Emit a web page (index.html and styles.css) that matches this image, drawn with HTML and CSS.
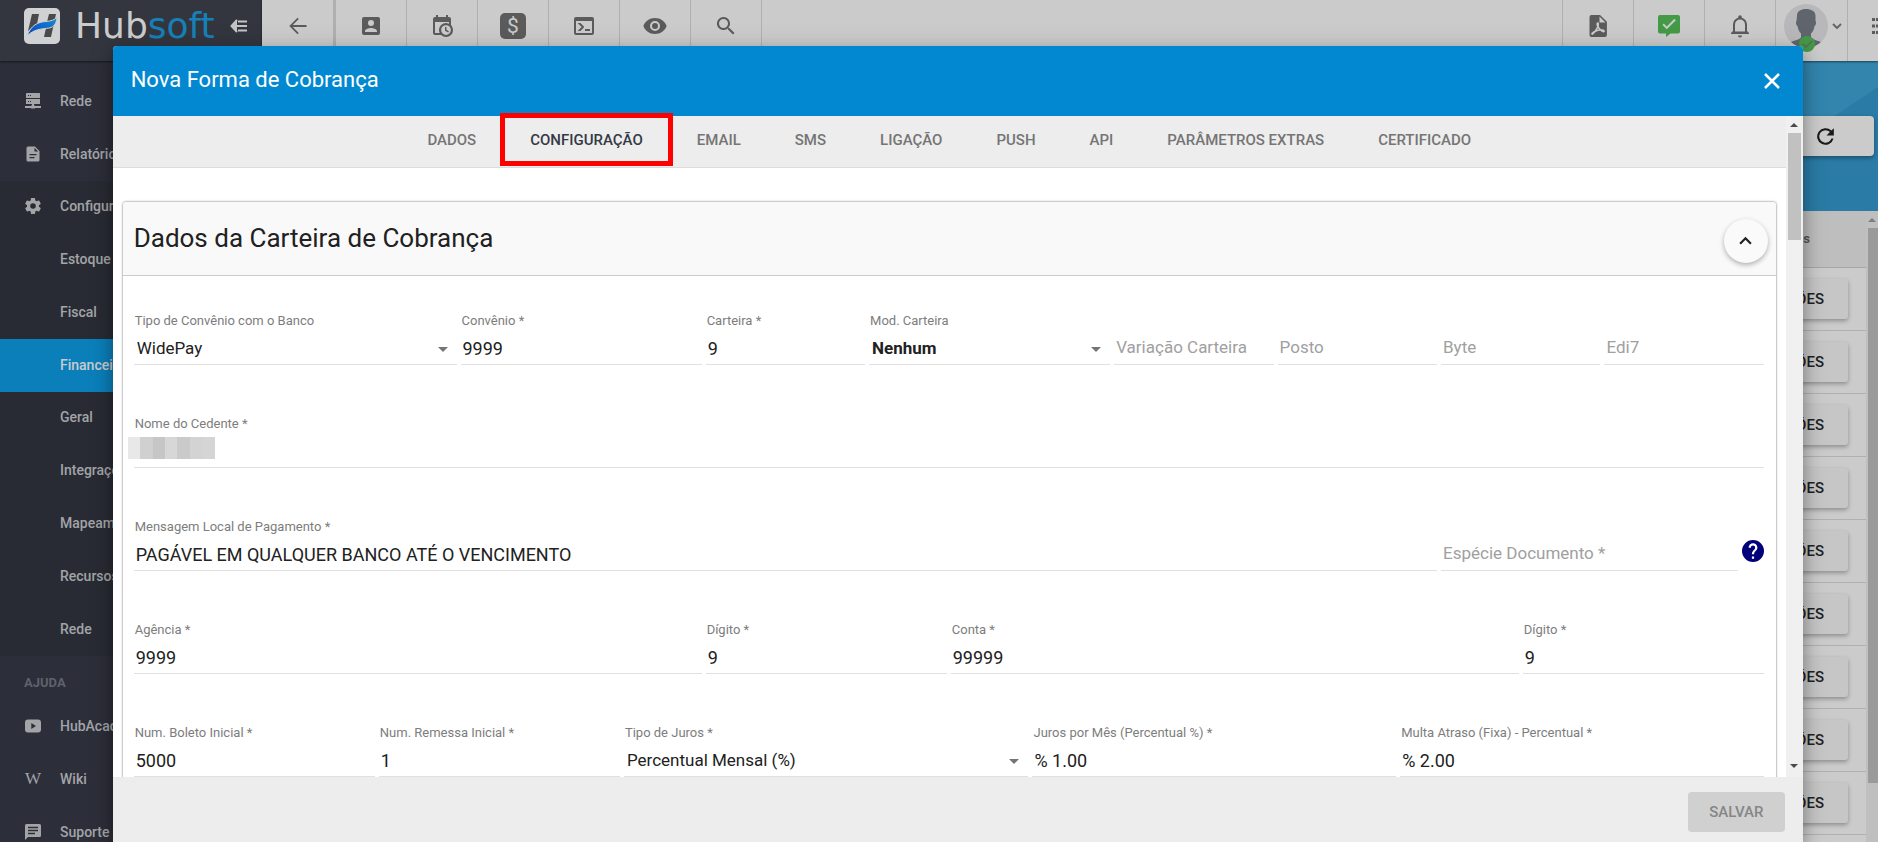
FILE: index.html
```html
<!DOCTYPE html>
<html lang="pt-BR">
<head>
<meta charset="utf-8">
<title>Hubsoft - Nova Forma de Cobrança</title>
<link rel="stylesheet" href="styles.css">
</head>
<body>
<div class="app">
  <aside class="sidebar">
    <div class="brand">
      <svg class="brand-mark" viewBox="0 0 36 36" aria-hidden="true">
        <defs><linearGradient id="swoosh" x1="0" y1="1" x2="1" y2="0"><stop offset="0" stop-color="#0a3fc0"/><stop offset="1" stop-color="#1490d4"/></linearGradient></defs>
        <rect width="36" height="36" rx="5" fill="#d0d1d2"/>
        <path d="M8 6h7l-2 10-9 7z" fill="#4a4a4a"/>
        <path d="M25 6h7l-5 23h-7l2-9-7 0 3-4 5-2z" fill="#4a4a4a"/>
        <path d="M3 28C7 17 14 14 22 13.500 27 13 31 12 33 9c-.500 6-2.500 9-6 10.500C22 21.500 12 19 3 28z" fill="url(#swoosh)" stroke="#d0d1d2" stroke-width="1"/>
      </svg>
      <span class="brand-name">Hub<span class="brand-accent">soft</span></span>
      <button class="collapse" aria-label="Recolher menu">
        <svg width="18" height="14" viewBox="0 0 18 14" fill="none" stroke="currentColor" stroke-width="2"><path d="M7 1 1.500 7 7 13M2 7h15M8 2.500h9M8 11.500h9"/></svg>
      </button>
    </div>
    <nav class="menu">
      <a class="item" href="#"><svg class="mi" viewBox="0 0 16 16"><path d="M1.500 0h13l.500.500V5H1V.500zM1 6h14v5H1zM7 11h2v1.500h1V13h6v2h-6v.500H6V15H0v-2h6v-.500h1z"/><path d="M3 2.500h1M5 2.500h1M3 8.500h1M5 8.500h1" stroke="#2c2e39"/></svg>Rede</a>
      <a class="item" href="#"><svg class="mi" viewBox="0 0 16 16"><path fill-rule="evenodd" d="M3 .500h7L14.500 5v9a1.500 1.500 0 0 1-1.500 1.500H3A1.500 1.500 0 0 1 1.500 14V2A1.500 1.500 0 0 1 3 .500zM9.500 1.800V5.500h3.700zM4.500 8v1.300h7V8zM4.500 11v1.300h5V11z"/></svg>Relatórios</a>
      <div class="section">
        <a class="item" href="#"><svg class="mi" viewBox="2 2 20 20"><path d="M12 15.500A3.500 3.500 0 0 1 8.500 12 3.500 3.500 0 0 1 12 8.500a3.500 3.500 0 0 1 3.500 3.500 3.500 3.500 0 0 1-3.500 3.500m7.430-2.530c.040-.320.070-.640.070-.970s-.030-.660-.070-1l2.110-1.630c.190-.150.240-.420.120-.640l-2-3.460c-.120-.220-.390-.310-.610-.220l-2.490 1c-.520-.390-1.060-.730-1.690-.980l-.370-2.650A.506.506 0 0 0 14 2h-4c-.250 0-.460.180-.500.420l-.370 2.650c-.630.250-1.170.590-1.690.980l-2.490-1c-.220-.090-.490 0-.610.220l-2 3.460c-.130.220-.070.490.120.640L4.570 11c-.040.340-.070.670-.070 1s.030.650.070.970l-2.110 1.660c-.190.150-.250.420-.120.640l2 3.460c.120.220.390.300.610.220l2.490-1.010c.520.400 1.060.740 1.690.990l.370 2.650c.040.240.250.420.500.420h4c.250 0 .460-.180.500-.420l.370-2.650c.630-.260 1.170-.590 1.690-.990l2.490 1.010c.220.080.490 0 .610-.220l2-3.460c.120-.220.070-.490-.120-.640z"/></svg>Configurações</a>
        <a class="item sub" href="#">Estoque</a>
        <a class="item sub" href="#">Fiscal</a>
        <a class="item sub active" href="#">Financeiro</a>
        <a class="item sub" href="#">Geral</a>
        <a class="item sub" href="#">Integrações</a>
        <a class="item sub" href="#">Mapeamento</a>
        <a class="item sub" href="#">Recursos</a>
        <a class="item sub" href="#">Rede</a>
      </div>
      <h2 class="heading">AJUDA</h2>
      <a class="item" href="#"><svg class="mi" viewBox="0 0 16 16"><path fill-rule="evenodd" d="M3 1.500h10a3 3 0 0 1 3 3v7a3 3 0 0 1-3 3H3a3 3 0 0 1-3-3v-7a3 3 0 0 1 3-3zM6.300 5v6l4.700-3z"/></svg>HubAcademy</a>
      <a class="item" href="#"><span class="mi wiki" aria-hidden="true">W</span>Wiki</a>
      <a class="item" href="#"><svg class="mi" viewBox="0 0 16 16"><path fill-rule="evenodd" d="M1.500 0h13A1.500 1.500 0 0 1 16 1.500v10a1.500 1.500 0 0 1-1.500 1.500H3l-3 3V1.500A1.500 1.500 0 0 1 1.500 0zM3 2.800v1.400h10V2.800zM3 5.800v1.400h10V5.800zM3 8.800v1.400h7V8.800z"/></svg>Suporte</a>
    </nav>
  </aside>
  <div class="main">
    <header class="toolbar">
      <button class="tool" aria-label="Voltar"><svg viewBox="0 0 24 24"><path d="M20.500 11.100v1.800H6.800l6 6-1.300 1.300L3.300 12l8.200-8.200 1.300 1.300-6 6z"/></svg></button>
      <button class="tool" aria-label="Clientes"><svg viewBox="0 0 24 24"><path d="M6 17c0-2 4-3.100 6-3.100s6 1.100 6 3.100v1H6m9-9a3 3 0 0 1-6 0 3 3 0 0 1 6 0M3 5v14a2 2 0 0 0 2 2h14a2 2 0 0 0 2-2V5a2 2 0 0 0-2-2H5a2 2 0 0 0-2 2z" fill-rule="evenodd"/></svg></button>
      <button class="tool" aria-label="Agenda"><svg viewBox="0 0 24 24"><path d="M15 13h1.500v2.800l2.400 1.400-.700 1.300L15 16.700zM19 8H5v11h4.700A7 7 0 0 1 19 9.700zM5 21a2 2 0 0 1-2-2V5a2 2 0 0 1 2-2h1V1h2v2h8V1h2v2h1a2 2 0 0 1 2 2v6.100A7 7 0 0 1 11.100 21zM16 11.200a4.800 4.800 0 1 0 0 9.700 4.800 4.800 0 0 0 0-9.700z"/></svg></button>
      <button class="tool" aria-label="Financeiro"><span class="money">$</span></button>
      <button class="tool" aria-label="Terminal"><svg viewBox="0 0 24 24"><path d="M20 19V7H4v12zM20 3a2 2 0 0 1 2 2v14a2 2 0 0 1-2 2H4a2 2 0 0 1-2-2V5a2 2 0 0 1 2-2zM13 17v-2h5v2zM9.600 13 5.600 9h2.800l3.300 3.300c.400.400.400 1 0 1.400L8.400 17H5.600z"/></svg></button>
      <button class="tool" aria-label="Visualizar"><svg viewBox="0 0 24 24"><path d="M12 9a3 3 0 1 0 0 6 3 3 0 0 0 0-6m0 8a5 5 0 1 1 0-10 5 5 0 0 1 0 10m0-13C6.500 4 2 7.300 .400 12c1.600 4.700 6.100 8 11.600 8s10-3.300 11.600-8C22 7.300 17.500 4 12 4z"/></svg></button>
      <button class="tool" aria-label="Buscar"><svg viewBox="0 0 24 24"><path d="M9.500 3a6.500 6.500 0 0 1 5 10.600l.300.300h.700l5 5-1.500 1.500-5-5v-.700l-.300-.300A6.500 6.500 0 1 1 9.500 3m0 2a4.500 4.500 0 1 0 0 9 4.500 4.500 0 0 0 0-9z"/></svg></button>
      <span class="spacer"></span>
      <button class="tool right" aria-label="PDF"><svg viewBox="0 0 24 24"><path fill-rule="evenodd" d="M14 1H5.500A2 2 0 0 0 3.500 3v18a2 2 0 0 0 2 2h13.400a2 2 0 0 0 2-2V7.800zM13.500 2.500v6h6z"/><path d="M12 9c-2 0-.500 5 4 8.200 2 1 3 0 1.500-.900-2.500-1-7 0-10.500 2.200-2 1.500-1 2.500.500.800C10 16.500 13.500 11 12 9z" fill="none" stroke="#cbcbcb" stroke-width="1.500"/></svg></button>
      <button class="tool right ok" aria-label="Mensagens"><svg viewBox="0 0 24 24"><path fill-rule="evenodd" d="M3 1h18a2 2 0 0 1 2 2v14.500a2 2 0 0 1-2 2h-7.500L9 23v-3.500H3a2 2 0 0 1-2-2V3a2 2 0 0 1 2-2zM6.800 9.500 5.500 10.900l4.300 4.300 9-9-1.400-1.400-7.600 7.600z"/></svg></button>
      <button class="tool right" aria-label="Notificações"><svg viewBox="0 0 24 24"><path d="M10 21.500h4a2 2 0 0 1-4 0M3 20v-1l2-2v-6.500c0-3.300 2-6 5.200-6.800V3a1.800 1.800 0 0 1 3.600 0v.700c3.200.800 5.200 3.500 5.200 6.800V17l2 2v1zM17 17.500v-7a5 5 0 0 0-10 0v7z"/></svg></button>
      <button class="tool right user" aria-label="Usuário">
        <span class="avatar">
          <svg class="face" viewBox="0 0 44 44"><defs><clipPath id="round"><circle cx="22" cy="22" r="22"/></clipPath></defs><g clip-path="url(#round)"><rect width="44" height="44" fill="#b8b8bb"/><path d="M13 12c0-5 4-7 9-7s9.500 2 9.500 7v5c1 1 .500 4-1 5-.500 4-2 6-3.500 7.500v4c2 3 10 3 13 7V46H4v-6c3-3.500 11-3.500 13-6.500v-4c-2-2-3-4-3.500-7.500-1.500-1-2-4-1-5z" fill="#60656d"/></g></svg>
          <svg class="status" viewBox="0 0 16 16"><circle cx="8" cy="8" r="8" fill="#449a46"/><path d="m4 8 3 3 6-6" fill="none" stroke="#5b6a62" stroke-width="1.500"/></svg>
        </span>
        <svg class="caret" viewBox="0 0 10 6"><path d="m1 1 4 4 4-4" fill="none" stroke="#666" stroke-width="2"/></svg>
      </button>
      <button class="tool right last" aria-label="Mais opções"><svg viewBox="0 0 24 24"><path d="M4 4h3v3H4zM4 10.500h3v3H4zM4 17h3v3H4zM8 4h12v3H8zM8 10.500h12v3H8zM8 17h12v3H8z"/></svg></button>
    </header>
    <section class="banner">
      <svg class="banner-art" viewBox="0 0 75 150" preserveAspectRatio="none" aria-hidden="true"><path d="M75 26 0 76V150h75z" fill="#2a7ba5"/></svg>
      <button class="refresh" aria-label="Atualizar"><svg viewBox="0 0 24 24"><path d="M17.650 6.350A8 8 0 1 0 19.730 14h-2.080A6 6 0 1 1 12 6c1.660 0 3.140.690 4.220 1.780L13 11h7V4z"/></svg></button>
    </section>
    <div class="listing">
      <table class="grid">
        <thead><tr><th>Ações</th></tr></thead>
        <tbody>
          <tr><td><button class="action">AÇÕES</button></td></tr>
          <tr><td><button class="action">AÇÕES</button></td></tr>
          <tr><td><button class="action">AÇÕES</button></td></tr>
          <tr><td><button class="action">AÇÕES</button></td></tr>
          <tr><td><button class="action">AÇÕES</button></td></tr>
          <tr><td><button class="action">AÇÕES</button></td></tr>
          <tr><td><button class="action">AÇÕES</button></td></tr>
          <tr><td><button class="action">AÇÕES</button></td></tr>
          <tr><td><button class="action">AÇÕES</button></td></tr>
        </tbody>
      </table>
      <div class="scrollbar page-bar" aria-hidden="true"><i class="up"></i><i class="thumb"></i></div>
    </div>
  </div>
</div>

<div class="dialog" role="dialog" aria-labelledby="dialog-title">
  <header class="dialog-head">
    <h1 id="dialog-title" class="dialog-title">Nova Forma de Cobrança</h1>
    <button class="close" aria-label="Fechar"><svg viewBox="0 0 16 16"><path d="m1 1 14 14M15 1 1 15" stroke="#fff" stroke-width="2.500"/></svg></button>
  </header>
  <div class="dialog-body">
    <div class="scroll">
      <div class="tabs" role="tablist">
        <button class="tab" role="tab">DADOS</button>
        <button class="tab selected" role="tab" aria-selected="true">CONFIGURAÇÃO</button>
        <button class="tab" role="tab">EMAIL</button>
        <button class="tab" role="tab">SMS</button>
        <button class="tab" role="tab">LIGAÇÃO</button>
        <button class="tab" role="tab">PUSH</button>
        <button class="tab" role="tab">API</button>
        <button class="tab" role="tab">PARÂMETROS EXTRAS</button>
        <button class="tab" role="tab">CERTIFICADO</button>
      </div>
      <section class="panel">
        <header class="panel-head">
          <h2 class="panel-title">Dados da Carteira de Cobrança</h2>
          <button class="fab" aria-label="Recolher"><svg viewBox="0 0 12 8"><path d="m1 7 5-5 5 5" fill="none" stroke="#212121" stroke-width="2"/></svg></button>
        </header>
        <form class="fields">
          <label class="field s8"><span class="label">Tipo de Convênio com o Banco</span><span class="pick"><select class="value"><option>WidePay</option></select></span></label>
          <label class="field s6"><span class="label">Convênio *</span><input class="value" value="9999"></label>
          <label class="field s4"><span class="label">Carteira *</span><input class="value" value="9"></label>
          <label class="field s6"><span class="label">Mod. Carteira</span><span class="pick"><select class="value strong"><option>Nenhum</option></select></span></label>
          <div class="field s4"><input class="value" placeholder="Variação Carteira" aria-label="Variação Carteira"></div>
          <div class="field s4"><input class="value" placeholder="Posto" aria-label="Posto"></div>
          <div class="field s4"><input class="value" placeholder="Byte" aria-label="Byte"></div>
          <div class="field s4"><input class="value" placeholder="Edi7" aria-label="Edi7"></div>

          <label class="field s40"><span class="label">Nome do Cedente *</span><input class="value"><span class="redacted"><i></i><i></i><i></i><i></i><i></i><i></i><i></i></span></label>

          <label class="field s32"><span class="label">Mensagem Local de Pagamento *</span><input class="value" value="PAGÁVEL EM QUALQUER BANCO ATÉ O VENCIMENTO"></label>
          <div class="with-help s8">
            <div class="field"><input class="value" placeholder="Espécie Documento *" aria-label="Espécie Documento"></div>
            <button type="button" class="help" aria-label="Ajuda"><svg viewBox="2 2 20 20"><path fill="#00007b" d="M15.070 11.250l-.900.920C13.450 12.890 13 13.500 13 15h-2v-.500c0-1.110.450-2.110 1.170-2.830l1.240-1.260c.370-.360.590-.860.590-1.410a2 2 0 0 0-4 0H8a4 4 0 0 1 8 0c0 .880-.360 1.670-.930 2.250M13 19h-2v-2h2M12 2a10 10 0 1 0 0 20 10 10 0 0 0 0-20z"/></svg></button>
          </div>

          <label class="field s14"><span class="label">Agência *</span><input class="value" value="9999"></label>
          <label class="field s6"><span class="label">Dígito *</span><input class="value" value="9"></label>
          <label class="field s14"><span class="label">Conta *</span><input class="value" value="99999"></label>
          <label class="field s6"><span class="label">Dígito *</span><input class="value" value="9"></label>

          <label class="field s6"><span class="label">Num. Boleto Inicial *</span><input class="value" value="5000"></label>
          <label class="field s6"><span class="label">Num. Remessa Inicial *</span><input class="value" value="1"></label>
          <label class="field s10"><span class="label">Tipo de Juros *</span><span class="pick"><select class="value"><option>Percentual Mensal (%)</option></select></span></label>
          <label class="field s9"><span class="label">Juros por Mês (Percentual %) *</span><input class="value" value="% 1.00"></label>
          <label class="field s9"><span class="label">Multa Atraso (Fixa) - Percentual *</span><input class="value" value="% 2.00"></label>
        </form>
      </section>
    </div>
    <div class="scrollbar dialog-bar" aria-hidden="true"><i class="up"></i><i class="thumb"></i><i class="down"></i></div>
  </div>
  <footer class="dialog-foot"><button class="save" disabled>SALVAR</button></footer>
</div>
</body>
</html>
```
FILE: styles.css
```css
* { box-sizing: border-box; }
body { margin: 0; height: 100vh; overflow: hidden; font-family: Roboto, "Liberation Sans", sans-serif; color: #212121; }
button, input, select { font: inherit; color: inherit; margin: 0; padding: 0; border: 0; background: none; }
h1, h2 { margin: 0; font-weight: 400; }
a { color: inherit; text-decoration: none; }
svg { display: block; fill: currentColor; }

.app { display: flex; height: 100vh; overflow: hidden; }

/* Sidebar */
.sidebar { width: 262px; flex: none; background: #2c2e39; color: #a3a4a8; box-shadow: 0 0 8px rgba(0,0,0,.4); z-index: 1; }
.brand { display: flex; align-items: center; height: 61px; padding: 0 14px 9px 24px; background: #33363f; box-shadow: 0 1px 2px rgba(0,0,0,.5); }
.brand-mark { width: 36px; height: 36px; }
.brand-name { flex: 1; margin-left: 15px; font-family: "DejaVu Sans", sans-serif; font-size: 36px; line-height: 36px; color: #cccccd; }
.brand-accent { color: #1681b8; }
.collapse { color: #c4c4c6; }
.menu { padding-top: 14px; font-size: 14px; font-weight: 500; }
.item { display: flex; align-items: center; gap: 19px; height: 53px; padding: 0 0 2px 25px; white-space: nowrap; }
.mi { width: 16px; height: 16px; flex: none; }
.wiki { font: 400 17px/16px "Liberation Serif", serif; }
.section { display: grid; grid-auto-rows: 1fr; height: 475px; background: #282b33; }
.section .item { height: auto; }
.section .sub { padding-left: 60px; }
.active { background: #0b7fba; color: #cbcbcb; }
.heading { height: 44px; padding: 19px 24px 0; font-size: 13px; line-height: 16px; font-weight: 700; color: #5f626a; }

/* Toolbar */
.main { flex: 1; min-width: 0; display: flex; flex-direction: column; background: #cbcbcb; }
.toolbar { display: flex; height: 61px; flex: none; background: #cbcbcb; color: #5b5b5b; box-shadow: 0 1px 2px rgba(0,0,0,.5); z-index: 1; }
.tool { display: flex; align-items: center; justify-content: center; width: 71px; padding-bottom: 9px; border-right: 1px solid #b0b0b0; flex: none; }
.tool svg { width: 24px; height: 24px; }
.tool:first-child { border-right: 3px solid #b0b0b0; width: 74px; }
.right { border-right: 0; border-left: 1px solid #b0b0b0; }
.ok { color: #449a46; }
.spacer { flex: 1; }
.money { width: 26px; height: 26px; border-radius: 5px; background: #5b5b5b; color: #cbcbcb; font-size: 21px; line-height: 26px; }
.user { width: 72px; padding-left: 3px; }
.avatar { position: relative; width: 44px; height: 44px; }
.tool .face { width: 44px; height: 44px; }
.tool .status { position: absolute; left: 15px; top: 32px; width: 16px; height: 16px; }
.tool .caret { width: 10px; height: 6px; margin-left: 4px; }
.last { width: 31px; justify-content: flex-start; padding-left: 20px; overflow: hidden; }
.last svg { flex: none; }

/* Page behind the dialog */
.banner { position: relative; display: flex; justify-content: flex-end; height: 150px; flex: none; padding: 55px 4px 0 0; background: #3385ae; }
.banner-art { position: absolute; right: 0; top: 0; width: 75px; height: 150px; }
.refresh { position: relative; display: flex; align-items: center; justify-content: flex-end; width: 400px; height: 40px; padding-right: 36px; border-radius: 4px; background: #cbcbcb; box-shadow: 0 2px 4px rgba(0,0,0,.35); color: #1a1a1a; }
.refresh svg { width: 25px; height: 25px; }
.listing { flex: 1; display: flex; overflow: hidden; }
.grid { flex: 1; border-collapse: collapse; align-self: flex-start; }
.grid th { height: 56px; padding: 0 56px 0 0; text-align: right; font-size: 13px; font-weight: 700; color: #555; background: #bebebe; border-bottom: 1px solid #a6a6a6; }
.grid td { height: 63px; padding: 0 18px 0 0; text-align: right; border-bottom: 1px solid #b0b0b0; }
.action { height: 40px; padding: 0 24px; border-radius: 3px; background: #c6c6c6; font-size: 15px; font-weight: 500; box-shadow: 0 2px 4px rgba(0,0,0,.3); }

.scrollbar { display: flex; flex-direction: column; align-items: center; flex: none; }
.up, .down { border: 4px solid transparent; }
.up { margin: 3px 0 6px; border-bottom-color: currentColor; }
.down { margin: auto 0 5px; border-top-color: currentColor; }
.page-bar { width: 12px; background: #bfbfbf; color: #7d7d7d; overflow: hidden; }
.page-bar .thumb { width: 10px; margin-left: 2px; height: 88%; background: #9a9a9a; }

/* Dialog */
.dialog { position: absolute; z-index: 2; left: 6%; top: 46px; bottom: 0; width: 90%; display: flex; flex-direction: column; border-radius: 4px 4px 0 0; background: #fff; overflow: hidden; }
.app::after { content: ""; position: absolute; z-index: 2; left: 6%; top: 46px; bottom: 0; width: 90%; border-radius: 4px 4px 0 0; box-shadow: 0 7px 16px rgba(0,0,0,.3), 0 4px 28px rgba(0,0,0,.15); }
.dialog-head { display: flex; align-items: center; justify-content: space-between; height: 70px; flex: none; padding: 0 23px 0 18px; background: #0288d1; color: #fff; }
.dialog-title { font-size: 22px; line-height: 28px; padding-bottom: 2px; }
.close svg { width: 16px; height: 16px; }
.dialog-body { flex: 1; min-height: 0; display: flex; }
/* The top allowance keeps the selected tab's outline visible over the header */
.scroll { flex: 1; min-width: 0; margin-top: -4px; padding-top: 4px; overflow: hidden; }
.tabs { display: flex; justify-content: center; height: 52px; background: #ededed; border-bottom: 1px solid #dcdcdc; font-size: 15px; font-weight: 500; color: #757575; }
.tab { position: relative; padding: 0 27px 4px; white-space: nowrap; font-weight: 500; }
.selected { color: #353946; }
.selected::after { content: ""; position: absolute; inset: -3px -3px 1px; border: 5px solid #f00; }
.dialog-bar { width: 17px; background: #f0f0f0; color: #4a4a4a; }
.dialog-bar .thumb { width: 13px; height: 107px; background: #c1c1c1; }

.panel { margin: 33px 9px 0; border: 1px solid #ccc; border-radius: 4px; box-shadow: 0 0 2px rgba(0,0,0,.2); }
.panel-head { display: flex; align-items: center; justify-content: space-between; height: 74px; padding: 4px 8px 0 11px; background: #f9f9f9; border-bottom: 1px solid #ccc; border-radius: 4px 4px 0 0; }
.panel-title { font-size: 26px; line-height: 32px; padding-bottom: 6px; }
.fab { display: flex; align-items: center; justify-content: center; width: 44px; height: 44px; border-radius: 50%; background: #fafafa; box-shadow: 0 2px 5px rgba(0,0,0,.3); }
.fab svg { width: 13px; height: 9px; }
.fields { display: grid; grid-template-columns: repeat(40, minmax(0, 1fr)); column-gap: 4px; row-gap: 50px; padding: 36px 12px 36px 11px; }
.s4 { grid-column: span 4; } .s6 { grid-column: span 6; } .s8 { grid-column: span 8; }
.s9 { grid-column: span 9; } .s10 { grid-column: span 10; } .s14 { grid-column: span 14; }
.s32 { grid-column: span 32; } .s40 { grid-column: span 40; }
.field { position: relative; display: flex; flex-direction: column; justify-content: flex-end; min-width: 0; height: 53px; }
.label { font-size: 13px; line-height: 18px; margin-bottom: 5px; padding-left: 1px; color: #7d7d7d; white-space: nowrap; }
.value { display: block; width: 100%; height: 30px; padding: 0 2px 3px; border-bottom: 1px solid #e0e0e0; border-radius: 0; font-size: 18px; appearance: none; outline: 0; }
.value:placeholder-shown { padding-bottom: 5px; }
.value:placeholder-shown, select.value { font-size: 17px; }
select.value { padding-left: 3px; }
.value::placeholder { color: #a0a0a0; opacity: 1; }
.strong { font-weight: 700; }
.pick { position: relative; display: block; }
.pick::after { content: ""; position: absolute; right: 9px; top: 12px; border: 5px solid transparent; border-top-color: #757575; border-bottom: 0; }
.redacted { position: absolute; left: -6px; bottom: 9px; display: grid; grid-template-columns: repeat(7, 1fr); width: 87px; height: 22px; background: #d5d5d5; }
.redacted i:nth-child(1) { background: #e8e8e8; }
.redacted i:nth-child(2) { background: #d0d0d0; }
.redacted i:nth-child(3) { background: #c6c6c6; }
.redacted i:nth-child(4) { background: #d7d7d7; }
.redacted i:nth-child(5) { background: #cacaca; }
.redacted i:nth-child(6) { background: #d3d3d3; }
.with-help { display: flex; gap: 4px; align-items: center; }
.with-help .field { flex: 1; }
.help svg { width: 22px; height: 22px; }
.help { padding: 12px 0 0; }

.dialog-foot { display: flex; justify-content: flex-end; height: 65px; flex: none; padding: 15px 18px 0; background: #ededed; }
.save { width: 97px; height: 40px; border-radius: 4px; background: #d0d0d0; color: #868686; font-size: 15px; font-weight: 500; }
```
